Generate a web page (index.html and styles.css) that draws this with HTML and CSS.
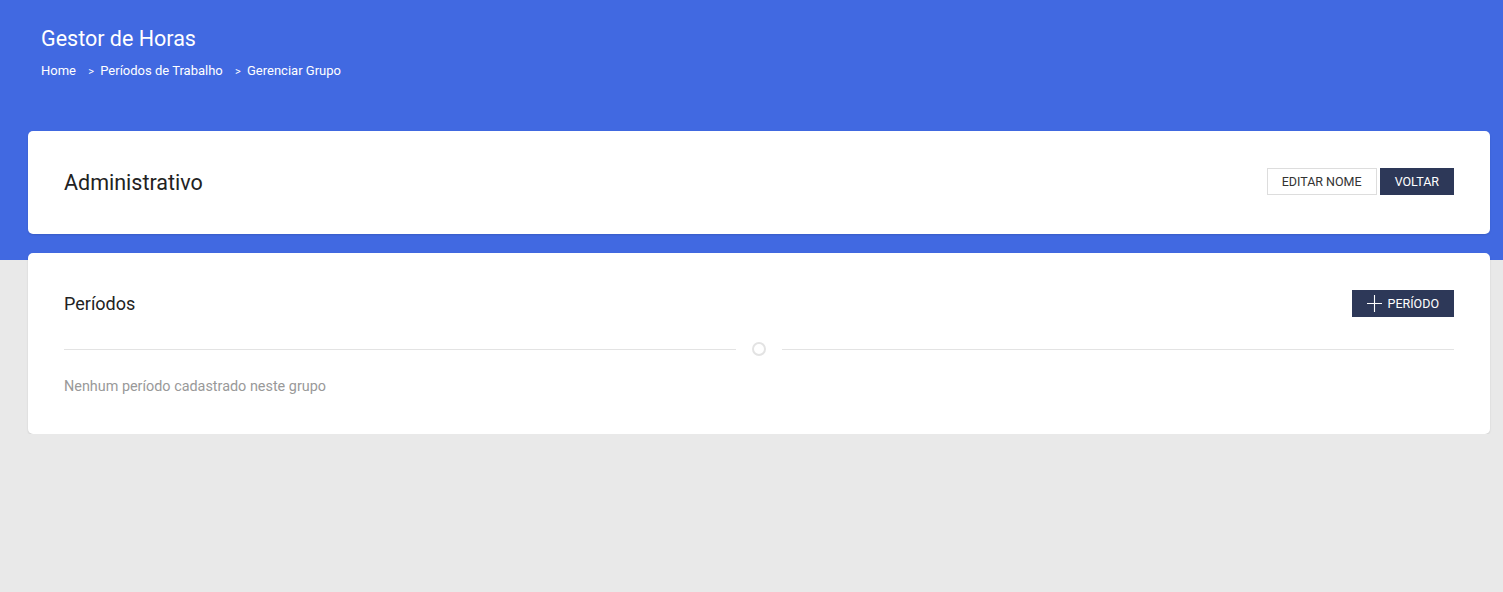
FILE: index.html
```html
<!DOCTYPE html>
<html>
  <head>
    <meta charset="utf-8">
    <title>Gestor de Horas</title>
    <link rel="stylesheet" href="styles.css">
  </head>
  <body>
    <header class="top">
      <h1>Gestor de Horas</h1>
      <nav class="crumbs">
        <a href="#">Home</a>
        <span class="sep">&gt;</span>
        <a href="#">Períodos de Trabalho</a>
        <span class="sep">&gt;</span>
        <a href="#">Gerenciar Grupo</a>
      </nav>
    </header>

    <main class="content">
      <!-- group name -->
      <section class="card card-head">
        <h2>Administrativo</h2>
        <div class="actions">
          <button class="btn btn-light">EDITAR NOME</button>
          <button class="btn btn-dark">VOLTAR</button>
        </div>
      </section>

      <!-- periods list -->
      <section class="card card-list">
        <div class="list-head">
          <h3>Períodos</h3>
          <button class="btn btn-dark btn-add">
            <svg width="15" height="17" viewBox="0 0 15 17"><path d="M7.5 0v17M0 8.5h15" stroke="#fff" stroke-width="1.1" fill="none"/></svg>
            PERÍODO
          </button>
        </div>
        <div class="divider"><span class="line"></span><span class="dot"></span><span class="line"></span></div>
        <p class="empty">Nenhum período cadastrado neste grupo</p>
      </section>
    </main>
  </body>
</html>
```
FILE: styles.css
```css
body { margin: 0; background: #e9e9e9; font-family: Roboto, "Liberation Sans", sans-serif; color: #333; }
.top { background: #4169e1; height: 260px; padding: 26px 41px 0; box-sizing: border-box; color: #fff; }
.top h1 { margin: 0; font-size: 21.5px; font-weight: 400; line-height: 26px; }
.crumbs { margin-top: 11px; font-size: 13px; line-height: 16px; }
.crumbs a { color: #fff; text-decoration: none; }
.crumbs .sep { margin: 0 3px 0 9px; font-size: 11px; }
.content { margin: -129px 13px 0 28px; display: flex; flex-direction: column; gap: 19px; }
.card { background: #fff; border-radius: 5px; box-shadow: 0 1px 2px rgba(0,0,0,0.12); }
.card-head { display: flex; align-items: center; justify-content: space-between; padding: 37px 36px 39px; }
.card-head h2 { margin: 0; font-size: 21.5px; font-weight: 400; line-height: 27px; color: #222; position: relative; top: 1px; }
.actions { display: flex; gap: 3px; }
.btn { font-family: inherit; font-size: 12.5px; height: 27px; padding: 0 14px; border-radius: 0; cursor: pointer; }
.btn-light { background: #fff; border: 1px solid #ddd; color: #333; }
.btn-dark { background: #2d3858; border: 1px solid #2d3858; color: #fff; }
.btn-add { display: flex; align-items: center; gap: 6px; padding: 0 14px 0 14px; }
.card-list { padding: 37px 36px 37px; }
.list-head { display: flex; align-items: center; justify-content: space-between; }
.list-head h3 { margin: 0; font-size: 18px; font-weight: 400; color: #222; }
.divider { display: flex; align-items: center; gap: 16px; margin: 25px 0 0; }
.divider .line { flex: 1; height: 1px; background: #e3e3e3; }
.divider .dot { width: 10px; height: 10px; border: 2px solid #e3e3e3; border-radius: 50%; }
.empty { margin: 21px 0 0; font-size: 14.4px; color: #999; line-height: 20px; }
```
